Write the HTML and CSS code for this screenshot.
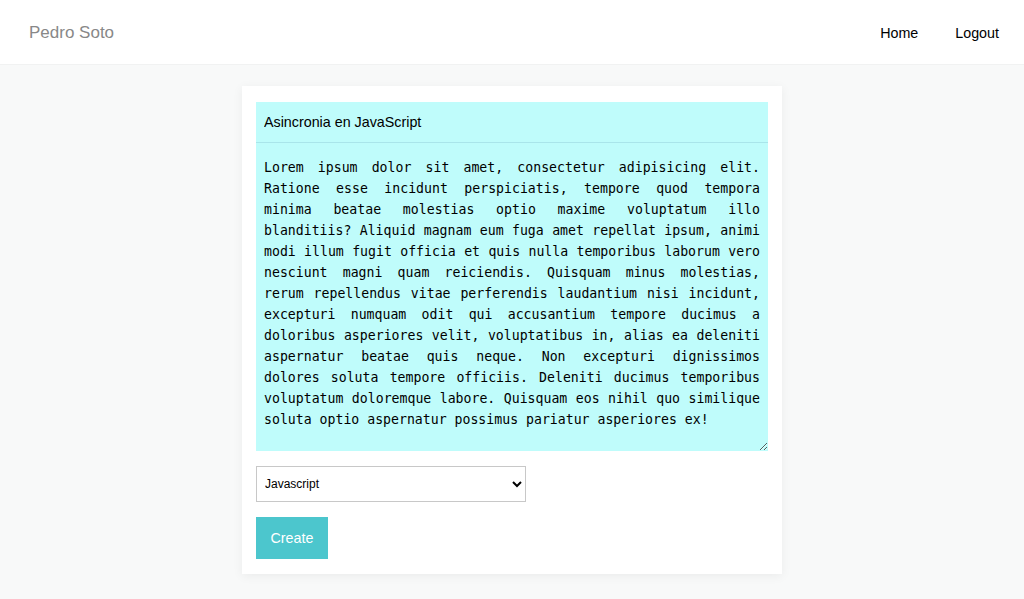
FILE: index.html
```html
<!DOCTYPE html>
<html lang="es">
<head>
<meta charset="utf-8">
<title>Pedro Soto</title>
<link rel="stylesheet" href="styles.css">
</head>
<body>
<header class="navbar">
  <a class="brand" href="#">Pedro Soto</a>
  <nav class="nav-links">
    <a href="#">Home</a>
    <a href="#">Logout</a>
  </nav>
</header>
<main class="main">
  <form class="card">
    <div class="note">
      <input class="note-title" type="text" value="Asincronia en JavaScript">
      <textarea class="note-body">Lorem ipsum dolor sit amet, consectetur adipisicing elit. Ratione esse incidunt perspiciatis, tempore quod tempora minima beatae molestias optio maxime voluptatum illo blanditiis? Aliquid magnam eum fuga amet repellat ipsum, animi modi illum fugit officia et quis nulla temporibus laborum vero nesciunt magni quam reiciendis. Quisquam minus molestias, rerum repellendus vitae perferendis laudantium nisi incidunt, excepturi numquam odit qui accusantium tempore ducimus a doloribus asperiores velit, voluptatibus in, alias ea deleniti aspernatur beatae quis neque. Non excepturi dignissimos dolores soluta tempore officiis. Deleniti ducimus temporibus voluptatum doloremque labore. Quisquam eos nihil quo similique soluta optio aspernatur possimus pariatur asperiores ex!</textarea>
    </div>
    <select class="lang">
      <option>Javascript</option>
      <option>Python</option>
    </select>
    <div class="actions">
      <button class="btn" type="button">Create</button>
    </div>
  </form>
</main>
</body>
</html>
```
FILE: styles.css
```css
* { box-sizing: border-box; }
html, body { margin: 0; padding: 0; }
body {
  background: #f8f9f9;
  font-family: "Liberation Sans", Arial, sans-serif;
  color: #000;
  height: 599px;
}
.navbar {
  height: 65px;
  background: #fff;
  border-bottom: 1px solid #f1f2f2;
  display: flex;
  align-items: center;
  justify-content: space-between;
  padding: 1px 25px 0 29px;
}
.brand {
  font-size: 17px;
  color: #888;
  text-decoration: none;
}
.nav-links {
  display: flex;
  gap: 37px;
}
.nav-links a {
  font-size: 14.3px;
  color: #000;
  text-decoration: none;
}
.main {
  display: flex;
  justify-content: center;
  padding-top: 21px;
}
.card {
  width: 540px;
  background: #fff;
  padding: 16px 14px 15px;
  box-shadow: 0 2px 10px rgba(0,0,0,0.06);
  display: flex;
  flex-direction: column;
  gap: 15px;
}
.note {
  display: flex;
  flex-direction: column;
  background: #bffcfb;
}
.note-title {
  height: 41px;
  border: none;
  border-bottom: 1px solid #a9e5ea;
  background: transparent;
  padding: 0 8px;
  font-family: "Liberation Sans", Arial, sans-serif;
  font-size: 14.3px;
  color: #000;
  outline: none;
}
.note-body {
  height: 308px;
  border: none;
  background: transparent;
  padding: 14px 8px 8px;
  font-family: Consolas, "DejaVu Sans Mono", monospace;
  font-size: 13.2px;
  line-height: 21px;
  text-align: justify;
  color: #000;
  outline: none;
  resize: vertical;
  overflow: hidden;
}
.lang {
  width: 270px;
  height: 36px;
  border: 1px solid #c8c8c8;
  background: #fff;
  font-family: "Liberation Sans", Arial, sans-serif;
  font-size: 12px;
  color: #000;
  padding: 0 4px;
}
.actions { display: flex; }
.btn {
  width: 72px;
  height: 42px;
  border: none;
  background: #4cc6cd;
  color: #fff;
  font-family: "Liberation Sans", Arial, sans-serif;
  font-size: 14.3px;
  cursor: pointer;
}
```
